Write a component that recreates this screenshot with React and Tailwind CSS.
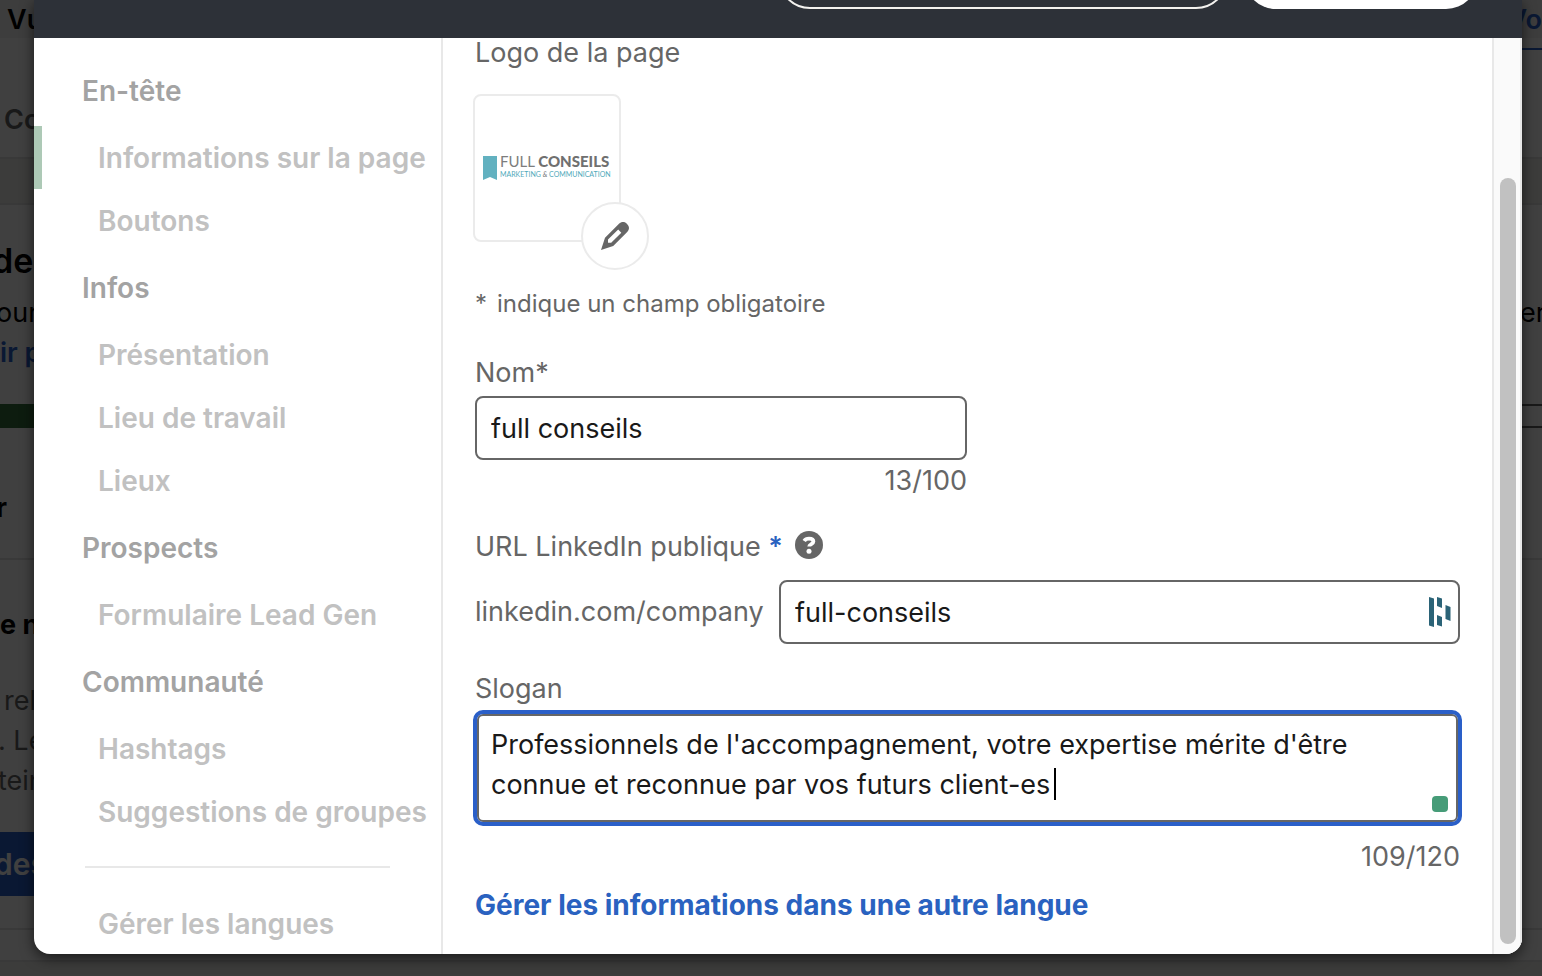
import { useState } from 'react'
import clsx from 'clsx'

const SECTIONS = [
  { title: 'En-tête', items: ['Informations sur la page', 'Boutons'] },
  { title: 'Infos', items: ['Présentation', 'Lieu de travail', 'Lieux'] },
  { title: 'Prospects', items: ['Formulaire Lead Gen'] },
  { title: 'Communauté', items: ['Hashtags', 'Suggestions de groupes'] },
]

function NavItem({ children, active }) {
  return (
    <a
      href="#"
      className={clsx(
        'flex items-center h-[63px] pl-14 border-l-8 whitespace-nowrap text-[#c1c1c1]',
        active ? 'border-[#adc9b6]' : 'border-transparent'
      )}
    >
      {children}
    </a>
  )
}

function SideNav() {
  return (
    <nav className="w-[409px] shrink-0 pt-[17px] border-r-2 border-[#e8e8e8] text-[28px] font-semibold overflow-hidden">
      {SECTIONS.map((section) => (
        <div key={section.title}>
          <h3 className="flex items-center h-[71px] pl-12 text-[#a3a3a3]">{section.title}</h3>
          {section.items.map((item) => (
            <NavItem key={item} active={item === 'Informations sur la page'}>
              {item}
            </NavItem>
          ))}
        </div>
      ))}
      <hr className="mt-[23px] mb-6 mx-[51px] border-t-2 border-[#e8e8e8]" />
      <NavItem>Gérer les langues</NavItem>
    </nav>
  )
}

function PageLogo() {
  return (
    <div className="relative w-[148px] h-[148px] mt-[26px] -ml-0.5 flex items-center px-2 rounded-lg border-2 border-[#ebebeb]">
      <svg className="w-3.5 h-6 shrink-0" viewBox="0 0 14 24" aria-hidden="true">
        <path d="M0 0h14v24l-7-3-7 3z" fill="#62b1c0" />
      </svg>
      <div className="ml-[3px] pb-1 font-[Lato] whitespace-nowrap">
        <p className="text-[15px] leading-4 text-[#7d7d7d]">
          FULL <b className="font-black text-[#707070]">CONSEILS</b>
        </p>
        <p className="text-[7px] leading-[10px] text-[#4fa9ba]">
          MARKETING <i className="text-[#777777]">&amp;</i> COMMUNICATION
        </p>
      </div>

      {/* Edit badge */}
      <button
        type="button"
        aria-label="Modifier le logo"
        className="absolute -right-[30px] -bottom-[30px] w-[68px] h-[68px] flex items-center justify-center rounded-full bg-white border-2 border-[#ebebeb]"
      >
        <svg className="w-7 h-7" viewBox="0 0 28 28" aria-hidden="true">
          <path
            fillRule="evenodd"
            fill="#666666"
            d="M0 28l4-12.200L18 1.800C20.500-.600 23.800-.600 26 2c2.600 2.300 2.600 5.500.200 8L12.200 24zM7 17.500v3.300h3.200L20.300 10.700 17.200 7.400z"
          />
        </svg>
      </button>
    </div>
  )
}

function HunterIcon() {
  return (
    <svg className="absolute right-[9px] top-[17px] w-[22px] h-[30px]" viewBox="0 0 22 30" fill="#2b6377" aria-hidden="true">
      <path d="M0 0l5 1.500v28.500l-5-1.500zM8 0l5 1.500v9.500l-5-2zM8 18l5 2v9.500l-5-1.500zM16.500 8l5 2v14l-5-2z" />
    </svg>
  )
}

const FIELD = 'block w-full h-16 px-3.5 rounded-lg border-2 border-[#666666] bg-white text-[#191919] outline-none'

function PageForm() {
  const [name, setName] = useState('full conseils')
  const [slug, setSlug] = useState('full-conseils')
  const [slogan, setSlogan] = useState(
    "Professionnels de l'accompagnement, votre expertise mérite d'être connue et reconnue par vos futurs client-es"
  )

  return (
    <form className="flex-1 min-w-0 px-8 text-[27px] text-[#666666] overflow-hidden">
      <h3 className="leading-[30px]">Logo de la page</h3>
      <PageLogo />

      <p className="mt-[46px] flex gap-2.5 text-[24px] leading-8">
        <span>*</span>
        <span>indique un champ obligatoire</span>
      </p>

      {/* Name */}
      <div className="mt-[34px] w-[492px]">
        <label htmlFor="name" className="block leading-[38px]">Nom*</label>
        <input
          id="name"
          className={clsx(FIELD, 'mt-1')}
          value={name}
          onChange={(e) => setName(e.target.value)}
        />
        <p className="text-right leading-[42px]">13/100</p>
      </div>

      {/* Public URL */}
      <div className="mt-[26px] flex items-center leading-[38px]">
        <label htmlFor="slug">
          URL LinkedIn publique <span className="font-semibold text-[#2a62c0]">*</span>
        </label>
        <button type="button" aria-label="Aide" className="ml-3 mb-1">
          <svg className="w-7 h-7" viewBox="0 0 28 28" aria-hidden="true">
            <circle cx="14" cy="14" r="14" fill="#666666" />
            <path
              d="M9.200 10c1-1.600 2.700-2.300 4.800-2.300 2.800 0 4.400 1 4.400 2.900 0 2.600-4.200 2.300-4.200 5"
              fill="none"
              stroke="#ffffff"
              strokeWidth="3.800"
            />
            <circle cx="14" cy="20.300" r="2.500" fill="#ffffff" />
          </svg>
        </button>
      </div>
      <div className="mt-3.5 flex items-center">
        <span className="w-[304px] shrink-0 whitespace-nowrap">linkedin.com/company</span>
        <div className="relative flex-1">
          <input
            id="slug"
            className={FIELD}
            value={slug}
            onChange={(e) => setSlug(e.target.value)}
          />
          <HunterIcon />
        </div>
      </div>

      {/* Tagline */}
      <label htmlFor="slogan" className="block mt-[26px] leading-[38px]">Slogan</label>
      <div className="relative mx-0.5 mt-1.5">
        <textarea
          id="slogan"
          rows="2"
          className="block w-full h-[108px] pt-[9px] px-3 resize-none overflow-hidden rounded-md border-2 border-[#666666] outline-4 outline-[#2a5fc8] leading-10 text-[#191919]"
          value={slogan}
          onChange={(e) => setSlogan(e.target.value)}
        />
        <span className="absolute left-[577px] top-[54px] w-0.5 h-8 bg-black" />
        <span className="absolute right-2.5 bottom-2.5 w-4 h-4 rounded bg-[#469c78]" />
      </div>
      <p className="mt-3.5 text-right leading-[42px]">109/120</p>

      <a href="#" className="block mt-2 leading-[38px] text-[28px] font-bold text-[#2a62c0]">
        Gérer les informations dans une autre langue
      </a>
    </form>
  )
}

// The admin page that stays visible around the dialog
function Backdrop() {
  return (
    <div className="[grid-area:1/1] min-w-0 overflow-hidden bg-white text-[27px] leading-10 text-black whitespace-nowrap">
      <div className="h-[38px] bg-[#f3f3f3] flex justify-between font-semibold">
        <span className="pl-[7px]">Vu</span>
        <span className="h-[50px] border-b-2 border-[#2a62c9] text-[#2a62c9]">Vo</span>
      </div>
      <div className="h-[119px] pt-[62px] pl-1 font-semibold text-[#666666]">Co</div>
      <div className="h-12 bg-[#f0efeb] border-y-2 border-[#e4e4e4]" />
      <div className="h-[199px] pt-9">
        <p className="-ml-2 text-[34px] font-semibold">de</p>
        <div className="mt-3 flex justify-between">
          <span className="-ml-1">our</span>
          <span className="-mr-1">er</span>
        </div>
        <p className="font-semibold text-[#2a62c9]">ir p</p>
      </div>
      <div className="h-6 flex justify-between">
        <span className="w-1/2 bg-[#35703f]" />
        <span className="w-1/2 border-y-2 border-[#666666]" />
      </div>
      <div className="h-[132px] pt-[60px] border-b-2 border-[#e4e4e4] font-bold">
        <span className="-ml-1">r</span>
      </div>
      <div className="h-[272px] pt-[45px]">
        <p className="font-bold">e n</p>
        <div className="mt-9 text-[#666666]">
          <p className="pl-1">rel</p>
          <p className="-ml-0.5">. Le</p>
          <p className="-ml-0.5">tein</p>
        </div>
      </div>
      <div className="h-16 w-40 pt-3 bg-[#2a62c9] text-[30px] font-semibold text-white">
        <span className="-ml-1.5">des</span>
      </div>
      <div className="h-[34px] border-b-2 border-[#e4e4e4]" />
      <div className="h-8 border-b-2 border-[#e4e4e4]" />
      <div className="h-20 bg-[#f0efeb]" />
    </div>
  )
}

export default function App() {
  return (
    <div className="grid grid-rows-[minmax(0,1fr)] grid-cols-[minmax(0,1fr)] h-screen overflow-hidden font-[Inter,sans-serif]">
      <Backdrop />
      <div className="[grid-area:1/1] relative bg-black/75" />

      <div
        role="dialog"
        aria-label="Modifier la page"
        className="[grid-area:1/1] relative ml-[34px] mr-5 mb-[22px] flex flex-col min-h-0 overflow-hidden rounded-b-2xl bg-white shadow-[0_4px_14px_rgba(0,0,0,0.6)]"
      >
        <header className="h-[38px] shrink-0 flex items-end justify-end gap-4 pr-11 pb-[29px] bg-[#2d3138]">
          <button type="button" aria-label="Aperçu" className="w-[450px] h-16 shrink-0 rounded-full border-2 border-[#f3f2ef]" />
          <button type="button" aria-label="Enregistrer" className="w-[234px] h-16 shrink-0 rounded-full bg-white" />
        </header>

        <div className="flex flex-1 min-h-0">
          <SideNav />
          <PageForm />

          {/* Scrollbar */}
          <div className="w-[30px] shrink-0 flex flex-col items-end pt-[140px] pb-2.5 pr-1 border-x-2 border-[#e8e8e8] bg-[#fafafa]">
            <div className="w-4 flex-1 rounded-full bg-[#c1c1c1]" />
          </div>
        </div>
      </div>
    </div>
  )
}
